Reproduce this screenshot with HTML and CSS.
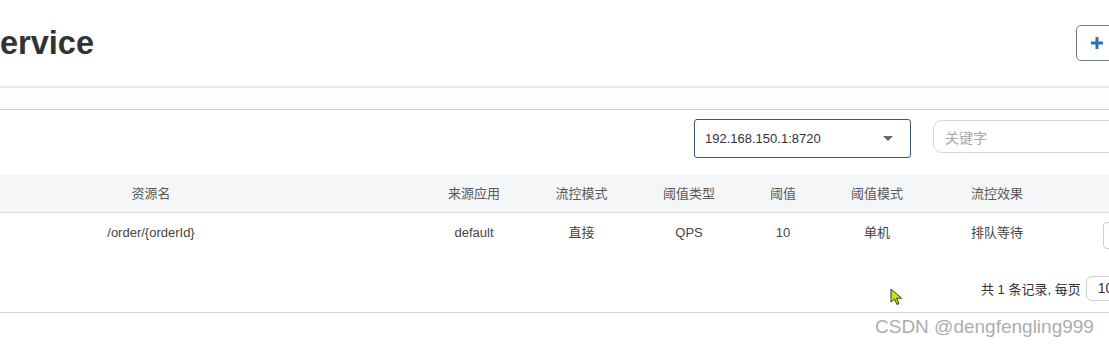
FILE: index.html
```html
<!DOCTYPE html>
<html lang="zh-CN">
<head>
<meta charset="utf-8">
<title>流控规则</title>
<link rel="stylesheet" href="styles.css">
</head>
<body>
<div class="page">
  <header class="header">
    <h1 class="title">ervice</h1>
    <button class="add-btn" type="button" aria-label="新增流控规则">
      <svg class="plus" width="12" height="12" viewBox="0 0 12 12" aria-hidden="true"><path d="M4.5 0h3v4.5H12v3H7.5V12h-3V7.5H0v-3h4.5z" fill="#2f6fb5"/></svg>
    </button>
  </header>
  <div class="gap-band"></div>
  <div class="toolbar">
    <div class="select">
      <span>192.168.150.1:8720</span>
      <span class="caret"></span>
    </div>
    <div class="search"><span class="placeholder">关键字</span></div>
  </div>
  <div class="table-wrap">
    <table class="rules">
      <colgroup>
        <col class="c-res"><col class="c-app"><col class="c-mode"><col class="c-type">
        <col class="c-val"><col class="c-cluster"><col class="c-effect"><col class="c-op">
      </colgroup>
      <thead>
        <tr>
          <th>资源名</th><th>来源应用</th><th>流控模式</th><th>阈值类型</th>
          <th>阈值</th><th>阈值模式</th><th>流控效果</th><th></th>
        </tr>
      </thead>
      <tbody>
        <tr>
          <td>/order/{orderId}</td><td>default</td><td>直接</td><td>QPS</td>
          <td>10</td><td>单机</td><td>排队等待</td>
          <td class="op"><button class="op-btn" type="button" aria-label="编辑"></button></td>
        </tr>
      </tbody>
    </table>
  </div>
  <div class="pager">
    <span class="pager-text">共 1 条记录, 每页</span>
    <div class="page-size">10</div>
  </div>
  <div class="watermark">CSDN @dengfengling999</div>
  <svg class="cursor" width="14" height="18" viewBox="0 0 14 18" aria-hidden="true"><path d="M1 1 L1 14 L4.5 11 L7 16.5 L9 15.6 L6.6 10.2 L11.5 10.2 Z" fill="#c9e21a" stroke="#3a3a10" stroke-width="1" stroke-linejoin="round"/></svg>
</div>
</body>
</html>
```
FILE: styles.css
```css
html, body {
  margin: 0;
  padding: 0;
  overflow: hidden;
  background: #fff;
}
body {
  font-family: "Liberation Sans", Arial, "Noto Sans CJK SC", sans-serif;
  color: #333;
  width: 1109px;
  height: 347px;
}
.page {
  position: relative;
  width: 1109px;
  height: 347px;
}
.header {
  display: flex;
  align-items: center;
  height: 86px;
  border-bottom: 2px solid #e8e8e8;
}
.title {
  margin: 0;
  font-size: 32.5px;
  line-height: 32px;
  font-weight: bold;
  color: #333;
  flex: 1;
}
.add-btn {
  display: flex;
  align-items: center;
  width: 140px;
  height: 36px;
  margin-right: -107px;
  padding: 0 0 0 14px;
  box-sizing: border-box;
  background: #fff;
  border: 1px solid #6e7b89;
  border-radius: 5px;
}
.gap-band {
  height: 21px;
  background: #fdfdfd;
  border-bottom: 1px solid #cfcfcf;
}
.toolbar {
  display: flex;
  align-items: flex-start;
  gap: 22px;
  padding: 9px 0 17px 694px;
  width: 700px;
}
.select {
  flex: 0 0 auto;
  width: 217px;
  height: 39px;
  box-sizing: border-box;
  border: 1px solid #405a76;
  border-radius: 3px;
  display: flex;
  align-items: center;
  justify-content: space-between;
  padding: 0 17px 0 10px;
  font-size: 13px;
  color: #333;
}
.caret {
  width: 0;
  height: 0;
  border-left: 5px solid transparent;
  border-right: 5px solid transparent;
  border-top: 5px solid #666;
}
.search {
  flex: 0 0 auto;
  width: 220px;
  height: 33px;
  margin-top: 1px;
  box-sizing: border-box;
  border: 1px solid #d9d9d9;
  border-radius: 9px;
  display: flex;
  align-items: center;
  padding-left: 11px;
}
.placeholder {
  font-size: 14px;
  color: #a8a8a8;
}
.table-wrap {
  margin-left: -118px;
  width: 1301px;
}
.rules {
  width: 1301px;
  table-layout: fixed;
  border-collapse: collapse;
  font-size: 13px;
}
.c-res { width: 538px; }
.c-app { width: 108px; }
.c-mode { width: 107px; }
.c-type { width: 108px; }
.c-val { width: 80px; }
.c-cluster { width: 108px; }
.c-effect { width: 132px; }
.c-op { width: 120px; }
.rules th {
  background: #f5f6f7;
  font-weight: normal;
  color: #5a5a5a;
  line-height: 37px;
  height: 37px;
  padding: 0;
  text-align: center;
  border-bottom: 1px solid #dcdcdc;
  white-space: nowrap;
}
.rules td {
  line-height: 39px;
  padding: 0;
  text-align: center;
  color: #444;
  white-space: nowrap;
}
.rules td.op {
  text-align: left;
  vertical-align: middle;
}
.op-btn {
  display: block;
  margin: 5px 0 0 40px;
  height: 27px;
  width: 60px;
  box-sizing: border-box;
  background: #fff;
  border: 1px solid #cfcfcf;
  border-radius: 4px;
  padding: 0;
}
.pager {
  display: flex;
  align-items: center;
  gap: 5px;
  padding: 24px 0 11px 981px;
  width: 200px;
  border-bottom: 1px solid #cfcfcf;
}
.pager-text {
  font-size: 13px;
  color: #333;
  white-space: nowrap;
}
.page-size {
  flex: 0 0 auto;
  width: 60px;
  height: 25px;
  box-sizing: border-box;
  border: 1px solid #cfcfcf;
  border-radius: 6px;
  padding-left: 11px;
  font-size: 14px;
  line-height: 23px;
  color: #333;
}
.watermark {
  position: absolute;
  left: 875px;
  top: 316px;
  font-size: 19px;
  line-height: 22px;
  color: #adadad;
  white-space: nowrap;
}
.cursor {
  position: absolute;
  left: 890px;
  top: 288px;
}
```
